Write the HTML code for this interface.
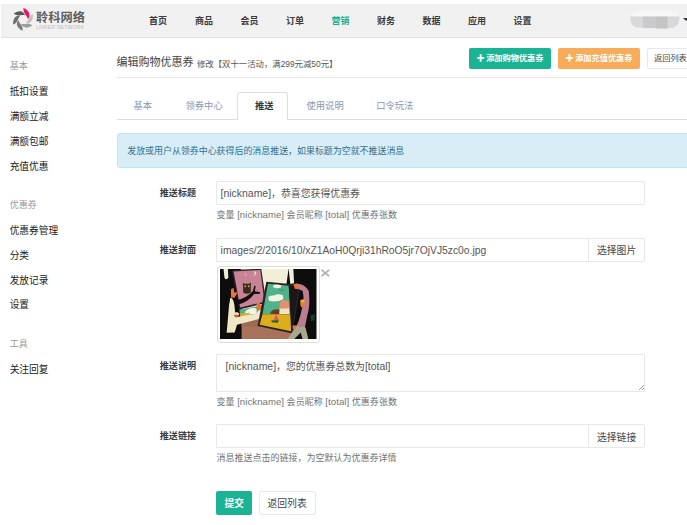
<!DOCTYPE html>
<html lang="zh-CN">
<head>
<meta charset="utf-8">
<title>编辑购物优惠券</title>
<style>
html,body{margin:0;padding:0;background:#fff;}
body{width:687px;height:525px;position:relative;overflow:hidden;
 font-family:"Liberation Sans","Noto Sans CJK SC",sans-serif;color:#333;font-size:9.5px;}
.t{position:absolute;white-space:nowrap;line-height:12px;height:12px;}
.b{font-weight:bold;}
#hdr{position:absolute;left:1px;top:4px;width:686px;height:33.200px;background:#f1f1f1;border-bottom:1.300px solid #e1e1e1;}
.nav{font-size:9px;font-weight:bold;color:#3d3d3d;top:14.6px;}
.side{font-size:9.7px;color:#222;left:9.7px;}
.sideh{font-size:9px;color:#999;left:9.7px;}
.lbl{font-size:9.05px;font-weight:bold;color:#3a3a3a;width:80px;left:116px;text-align:right;}
.help{font-size:9px;color:#737373;left:216.5px;letter-spacing:0.05px;}
.help .l{font-size:9.6px;}
.inp{position:absolute;box-sizing:border-box;border:1px solid #e7e8e9;background:#fff;border-radius:1px;}
.itx{font-size:9.9px;color:#555;}
.itx .l{font-size:10.45px;}
.btn{position:absolute;box-sizing:border-box;border-radius:2px;text-align:center;white-space:nowrap;}
.tab{font-size:9.3px;color:#8d96b3;top:99.5px;}
</style>
</head>
<body>

<!-- header -->
<div id="hdr"></div>
<svg style="position:absolute;left:8px;top:4px" width="32" height="32" viewBox="0 0 525 525">
 <defs><filter id="lb"><feGaussianBlur stdDeviation="3.5"/></filter></defs>
 <g filter="url(#lb)">
 <path transform="translate(247 255) rotate(0) scale(1.0)" d="M6,-188 C64,-170 116,-110 105,-57 C100,-36 92,-22 80,-8 C72,-45 36,-82 20,-112 C9,-134 5,-162 6,-188 Z" fill="#ec1561"/>
 <path transform="translate(247 255) rotate(60) scale(0.96)" d="M6,-188 C64,-170 116,-110 105,-57 C100,-36 92,-22 80,-8 C72,-45 36,-82 20,-112 C9,-134 5,-162 6,-188 Z" fill="#c2c2c2"/>
 <path transform="translate(247 255) rotate(120) scale(0.96)" d="M6,-188 C64,-170 116,-110 105,-57 C100,-36 92,-22 80,-8 C72,-45 36,-82 20,-112 C9,-134 5,-162 6,-188 Z" fill="#9e9e9e"/>
 <path transform="translate(247 255) rotate(180) scale(0.96)" d="M6,-188 C64,-170 116,-110 105,-57 C100,-36 92,-22 80,-8 C72,-45 36,-82 20,-112 C9,-134 5,-162 6,-188 Z" fill="#7c7c7c"/>
 <path transform="translate(247 255) rotate(240) scale(0.96)" d="M6,-188 C64,-170 116,-110 105,-57 C100,-36 92,-22 80,-8 C72,-45 36,-82 20,-112 C9,-134 5,-162 6,-188 Z" fill="#6e6e6e"/>
 <path transform="translate(247 255) rotate(300) scale(0.96)" d="M6,-188 C64,-170 116,-110 105,-57 C100,-36 92,-22 80,-8 C72,-45 36,-82 20,-112 C9,-134 5,-162 6,-188 Z" fill="#585858"/>
 </g>
</svg>
<div class="t b" style="left:36px;top:10.5px;font-size:12.2px;line-height:14px;height:14px;color:#5e5e5e;letter-spacing:0.05px">聆科网络</div>
<svg style="position:absolute;left:35px;top:24px" width="54" height="8"><text x="1" y="5.2" font-family="Liberation Sans, sans-serif" font-size="4.9" fill="#bdbdbd" textLength="48" lengthAdjust="spacingAndGlyphs">LINKER NETWORK</text></svg>

<div class="t nav" style="left:149px">首页</div>
<div class="t nav" style="left:195px">商品</div>
<div class="t nav" style="left:240.5px">会员</div>
<div class="t nav" style="left:286px">订单</div>
<div class="t nav" style="left:331.5px;color:#1ab394">营销</div>
<div class="t nav" style="left:377px">财务</div>
<div class="t nav" style="left:422.5px">数据</div>
<div class="t nav" style="left:468px">应用</div>
<div class="t nav" style="left:513.5px">设置</div>

<!-- blurred user name -->
<svg style="position:absolute;left:626px;top:8px" width="61" height="24" viewBox="0 0 61 24">
 <defs><filter id="ub"><feGaussianBlur stdDeviation="0.5"/></filter></defs>
 <g filter="url(#ub)">
 <path d="M5 6 Q8 2.5 18 2.5 L44 2.5 Q52 2.5 53 8 L5 8 Z" fill="#f6f6f6"/>
 <path d="M4 8.5 L16.5 8.5 L16.5 19.5 L10 19.5 Q4 17 4 8.5 Z" fill="#d9d9d9"/>
 <rect x="16.5" y="8.500" width="12.700" height="11.600" fill="#c9cacc"/>
 <rect x="29.200" y="8.500" width="12.600" height="12" fill="#c4c4c4"/>
 <path d="M41.800 8.500 L53.500 8.500 Q54 17 47 20 L41.800 20 Z" fill="#d7d8da"/>
 </g>
 <path d="M57 10 L63 10 L60 13 Z" fill="#3c3c3c"/>
</svg>
<!-- sidebar -->
<div class="t sideh" style="top:59.8px">基本</div>
<div class="t side" style="top:85.6px">抵扣设置</div>
<div class="t side" style="top:110.6px">满额立减</div>
<div class="t side" style="top:135.9px">满额包邮</div>
<div class="t side" style="top:160.9px">充值优惠</div>
<div class="t sideh" style="top:198.8px">优惠券</div>
<div class="t side" style="top:224.7px">优惠券管理</div>
<div class="t side" style="top:249.7px">分类</div>
<div class="t side" style="top:275px">发放记录</div>
<div class="t side" style="top:299.3px">设置</div>
<div class="t sideh" style="top:337.8px">工具</div>
<div class="t side" style="top:364.1px">关注回复</div>

<!-- page title -->
<div class="t" style="left:116.5px;top:55px;font-size:11px;line-height:15px;height:15px;color:#444">编辑购物优惠券</div>
<div class="t" style="left:196.9px;top:57.5px;font-size:8.4px;color:#555">修改【双十一活动，满299元减50元】</div>
<div style="position:absolute;left:116.5px;top:77px;width:571px;height:1px;background:#e7e7e7"></div>

<!-- top buttons -->
<div class="btn b" style="left:469px;top:48px;width:82px;height:21px;background:#1ab394;color:#fff;font-size:8.2px;line-height:21px"><span style="font-size:8px">✚</span>&#8201;添加购物优惠券</div>
<div class="btn b" style="left:558px;top:48px;width:82px;height:21px;background:#f8ac59;color:#fff;font-size:8.2px;line-height:21px"><span style="font-size:8px">✚</span>&#8201;添加充值优惠券</div>
<div class="btn" style="left:647px;top:48px;width:50px;height:21px;background:#fff;border:1px solid #e7eaec;color:#444;font-size:8.2px;line-height:19px;text-align:left;padding-left:6px">返回列表</div>

<!-- tabs -->
<div style="position:absolute;left:116.5px;top:118.5px;width:571px;height:1px;background:#ddd"></div>
<div style="position:absolute;box-sizing:border-box;left:237px;top:92px;width:51px;height:27.5px;background:#fff;border:1px solid #ddd;border-bottom:none;border-radius:3px 3px 0 0"></div>
<div class="t tab" style="left:133.5px">基本</div>
<div class="t tab" style="left:185.5px">领券中心</div>
<div class="t tab b" style="left:255px;color:#333">推送</div>
<div class="t tab" style="left:306.5px">使用说明</div>
<div class="t tab" style="left:376.2px">口令玩法</div>

<!-- alert -->
<div style="position:absolute;box-sizing:border-box;left:116.5px;top:133px;width:580px;height:34.5px;background:#d9edf7;border:1px solid #bce8f1;border-radius:3px"></div>
<div class="t" style="left:127.2px;top:144.8px;font-size:8.95px;color:#31708f">发放或用户从领券中心获得后的消息推送，如果标题为空就不推送消息</div>

<!-- row 1 -->
<div class="t lbl" style="top:187px">推送标题</div>
<div class="inp" style="left:216px;top:181px;width:429px;height:24px"></div>
<div class="t itx" style="left:220.6px;top:187.9px"><span class="l">[nickname]</span>，恭喜您获得优惠券</div>
<div class="t help" style="top:209px">变量 <span class="l">[nickname]</span> 会员昵称 <span class="l">[total]</span> 优惠券张数</div>

<!-- row 2 -->
<div class="t lbl" style="top:243.5px">推送封面</div>
<div class="inp" style="left:216px;top:238px;width:373px;height:24px;border-radius:1px 0 0 1px"></div>
<div class="t itx" style="left:220.6px;top:244.9px;font-size:10.3px">images/2/2016/10/xZ1AoH0Qrji31hRoO5jr7OjVJ5zc0o.jpg</div>
<div class="inp" style="left:588px;top:238px;width:57px;height:24px;border-radius:0 2px 2px 0"></div>
<div class="t" style="left:597px;top:245.3px;font-size:9.8px;color:#444">选择图片</div>

<!-- thumbnail -->
<div style="position:absolute;box-sizing:border-box;left:217px;top:266px;width:102.500px;height:76.500px;border:1px solid #ddd;border-radius:3px;background:#fff"></div>
<svg style="position:absolute;left:220px;top:269.3px" width="96.5" height="70.2" viewBox="25 28 625 455" preserveAspectRatio="none">
 <defs><filter id="bl" x="-5%" y="-5%" width="110%" height="110%"><feGaussianBlur stdDeviation="2.2"/></filter>
 <clipPath id="cp"><rect x="25" y="28" width="625" height="455"/></clipPath></defs>
 <g clip-path="url(#cp)"><g filter="url(#bl)">
 <rect x="0" y="0" width="700" height="520" fill="#0e0b0c"/>
 <!-- cream sky between trunks -->
 <path d="M160 20 L470 20 L455 130 L500 420 L500 500 L160 500 Z" fill="#f3efd6"/>
 <path d="M48 28 L76 28 L79 82 Q68 104 54 86 Z" fill="#e9eed6"/>
 <path d="M470 28 L500 28 L505 120 L480 125 Z" fill="#f1efdc"/>
 <!-- dark trunk left of centre -->
 <path d="M80 28 L125 28 L165 300 L170 483 L110 483 L120 300 Z" fill="#0e0b0c"/>
 <!-- floor -->
 <path d="M165 385 L495 400 L500 483 L165 483 Z" fill="#a8725c"/>
 <path d="M165 345 L290 330 L280 400 L165 400 Z" fill="#9c6a52"/>
 <!-- left painting : pink -->
 <path d="M100 36 L292 26 L325 248 L150 290 Z" fill="#2a2226"/>
 <path d="M113 44 L286 34 L313 240 L156 278 Z" fill="#c98397"/>
 <!-- lower part of left painting -->
 <path d="M150 292 L300 262 L292 335 L160 352 Z" fill="#56b08a"/>
 <path d="M190 300 Q230 270 262 285 L262 318 L185 325 Z" fill="#f4f2e2"/>
 <path d="M155 318 L215 312 L225 345 L160 352 Z" fill="#d9b22c"/>
 <!-- owl + branch -->
 <path d="M128 232 Q200 215 238 170 L248 135 L256 140 L250 172 L285 178 L284 188 L246 190 Q205 245 135 262 Z" fill="#14100f"/>
 <path d="M173 118 L186 124 L212 124 L225 116 L224 180 Q200 196 176 182 Z" fill="#3b2a18"/>
 <circle cx="188" cy="140" r="6" fill="#b9b23a"/><circle cx="211" cy="140" r="6" fill="#b9b23a"/>
 <!-- moon & star -->
 <path d="M248 42 Q268 55 246 72 Q258 58 248 42 Z" fill="#f6e9e6" stroke="#f6e9e6" stroke-width="3"/>
 <path d="M190 52 L190 78 M177 65 L203 65" stroke="#e4b6c6" stroke-width="3"/>
 <!-- left man -->
 <path d="M92 215 Q118 215 122 300 L126 340 L258 318 L285 285 L302 294 L284 350 L135 390 L120 440 L68 442 Q78 330 84 260 Z" fill="#efe7c6"/>
 <path d="M96 160 L112 150 L118 180 L140 178 L120 215 L96 212 Z" fill="#e8733a"/>
 <path d="M262 250 L282 245 L286 262 L318 258 L316 272 L284 296 L262 290 Z" fill="#e8733a"/>
 <ellipse cx="132" cy="325" rx="17" ry="15" fill="#d9552f"/>
 <path d="M112 318 Q130 300 150 316 L148 324 L114 326 Z" fill="#e9e2b8"/>
 <!-- right painting -->
 <path d="M325 110 L548 132 L494 446 L268 398 Z" fill="#2b2327"/>
 <path d="M336 124 L470 136 L486 322 L300 322 Z" fill="#50b28a"/>
 <path d="M300 322 L486 322 L486 432 L282 390 Z" fill="#dcae1f"/>
 <path d="M470 136 L535 142 L490 432 L486 432 Z" fill="#1a1518"/>
 <path d="M336 215 Q345 195 375 200 Q400 185 432 198 L436 222 Q400 245 345 236 Z" fill="#f4f2e2"/>
 <path d="M368 132 Q395 122 425 136 L418 148 Q392 156 372 148 Z" fill="#f4f2e2"/>
 <path d="M412 250 L428 228 L470 236 L472 282 L410 284 Z" fill="#e98e6c"/>
 <path d="M410 284 L472 282 L474 320 L408 320 Z" fill="#f1e3c0"/>
 <path d="M348 318 Q360 285 410 290 L408 322 Z" fill="#6b3a22"/>
 <path d="M388 322 L408 360 L372 362 Z" fill="#e8506c"/>
 <path d="M356 362 L405 360 L400 376 L362 374 Z" fill="#1f5a3c"/>
 <path d="M405 160 L440 164 L438 172 L405 168 Z" fill="#3f9a78"/>
 <!-- right man -->
 <path d="M505 128 Q560 110 600 170 Q612 260 590 330 L575 408 L520 398 Q540 360 552 300 Q575 230 560 170 L515 150 Z" fill="#bb7d8f"/>
 <path d="M500 128 L520 120 L540 132 L528 160 L510 156 Z" fill="#e8733a"/>
 <ellipse cx="560" cy="252" rx="15" ry="26" fill="#e27a3e"/>
 <path d="M545 232 Q558 220 574 232 L570 246 L548 244 Z" fill="#e0b82a"/>
 <path d="M520 396 L578 406 L598 483 L560 483 L548 440 L505 483 L462 483 Z" fill="#a9a88f"/>
 <path d="M494 396 L520 392 L516 416 L498 418 Z" fill="#e8733a"/>
 <!-- right trunk -->
 <path d="M600 28 L660 28 L660 483 L598 483 L610 330 Z" fill="#0e0b0c"/>
 <path d="M610 330 L640 320 L636 360 L614 366 Z" fill="#16402c"/>
 </g></g>
</svg>
<div class="t b" style="left:320px;top:266.4px;font-size:14px;line-height:14px;height:14px;color:#b4b4b4;transform:scaleX(1.3);transform-origin:0 0;filter:blur(0.3px)">×</div>

<!-- row 3 -->
<div class="t lbl" style="top:359.9px">推送说明</div>
<div class="inp" style="left:216px;top:354px;width:429px;height:38px"></div>
<div class="t itx" style="left:225.6px;top:360.9px"><span class="l">[nickname]</span>，您的优惠券总数为<span class="l">[total]</span></div>
<svg style="position:absolute;left:637.5px;top:384px" width="7" height="7"><path d="M6 1 L1 6 M6 4 L4 6" stroke="#777" stroke-width="0.7" fill="none"/></svg>
<div class="t help" style="top:395.9px">变量 <span class="l">[nickname]</span> 会员昵称 <span class="l">[total]</span> 优惠券张数</div>

<!-- row 4 -->
<div class="t lbl" style="top:429.8px">推送链接</div>
<div class="inp" style="left:216px;top:424px;width:373px;height:24px;border-radius:1px 0 0 1px"></div>
<div class="inp" style="left:588px;top:424px;width:57px;height:24px;border-radius:0 2px 2px 0"></div>
<div class="t" style="left:597px;top:431.6px;font-size:9.8px;color:#444">选择链接</div>
<div class="t help" style="top:451.9px;font-size:9px;letter-spacing:0">消息推送点击的链接，为空默认为优惠券详情</div>

<!-- bottom buttons -->
<div class="btn b" style="left:216px;top:491px;width:36.300px;height:23.500px;background:#1ab394;color:#fff;font-size:9.7px;line-height:26.500px">提交</div>
<div class="btn" style="left:258.600px;top:491px;width:57px;height:23.500px;background:#fff;border:1px solid #e7eaec;color:#444;font-size:9.8px;line-height:24.500px">返回列表</div>

</body>
</html>
